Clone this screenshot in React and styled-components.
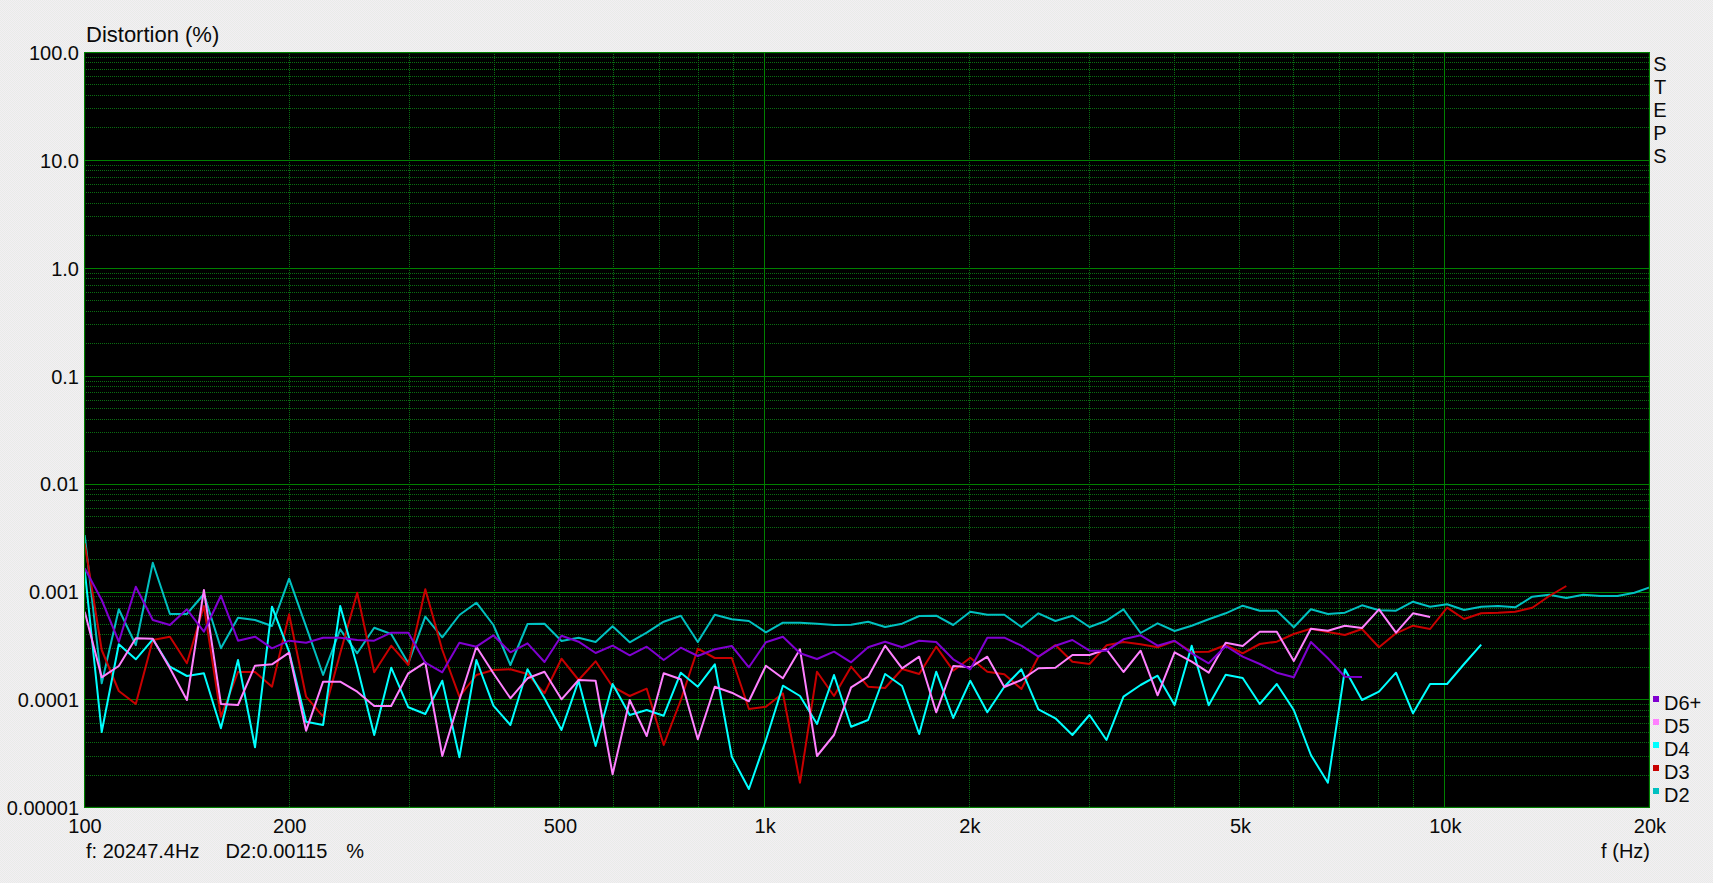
import React from 'react'
import styled, { createGlobalStyle } from 'styled-components'

const PLOT_W = 1566
const PLOT_H = 756
const X0 = 0.7
const STEP = 17.03
const DECADE_H = 107.9
const DECADE_W = 680

// trace samples, one every 1/12 octave from 100 Hz. values are thirds of a pixel under y=560 of the page
const traces = [
  { name: 'D2', color: '#00c0c0', points: [
    -75, 370, 148, 255, 8, 162, 162, 102, 265, 173, 180, 198, 56, 200, 345, 208, 280, 203, 222, 310, 170,
    232, 165, 128, 195, 315, 192, 191, 243, 233, 246, 199, 247, 218, 185, 167, 246, 164, 178, 183, 217, 188, 188, 191, 195,
    194, 185, 201, 191, 168, 167, 195, 155, 164, 164, 201, 160, 183, 167, 201, 182, 148, 219, 190, 213, 197, 178, 160, 137, 152, 152,
    202, 148, 162, 158, 136, 151, 152, 125, 140, 133, 150, 140, 138, 142, 110, 104, 114, 104, 108, 108, 98, 80,
  ] },
  { name: 'D3', color: '#c80000', points: [
    -50, 270, 393, 432, 240, 230, 310, 138, 470, 336, 336, 380, 163, 410, 470, 280, 98, 337, 257, 315, 88,
    270, 410, 345, 330, 328, 342, 400, 296, 360, 304, 380, 408, 386, 555, 420, 266, 294, 294, 447, 440, 400, 668, 335, 408,
    320, 380, 384, 327, 342, 260, 332, 293, 335, 343, 387, 290, 255, 305, 312, 256, 246, 253, 262, 243, 276, 275, 255, 280, 252, 245,
    222, 206, 216, 225, 207, 262, 220, 197, 207, 143, 177, 160, 158, 155, 143, 108, 78,
  ] },
  { name: 'D4', color: '#00ffff', points: [
    30, 516, 253, 298, 238, 320, 348, 340, 505, 300, 562, 140, 275, 485, 495, 138, 320, 525, 323, 442, 462,
    362, 592, 300, 437, 495, 328, 415, 510, 362, 558, 372, 465, 450, 467, 338, 380, 313, 590, 687, 540, 377, 408, 492, 345,
    500, 480, 342, 378, 522, 335, 474, 362, 457, 380, 328, 448, 475, 525, 465, 540, 410, 375, 347, 435, 257, 436, 344, 354, 432, 372,
    450, 585, 668, 328, 420, 395, 338, 460, 372, 372, 312, 254,
  ] },
  { name: 'D5', color: '#ff80ff', points: [
    155, 352, 318, 235, 236, 325, 420, 90, 432, 435, 317, 313, 278, 512, 365, 365, 395, 438, 438, 340, 307,
    588, 420, 260, 340, 415, 355, 335, 418, 360, 362, 643, 420, 528, 340, 358, 538, 380, 398, 424, 317, 355, 268, 588, 525,
    382, 350, 257, 325, 290, 457, 318, 322, 290, 381, 360, 325, 323, 285, 285, 268, 336, 272, 406, 277, 305, 338, 248, 258, 215, 215,
    303, 206, 212, 197, 204, 148, 218, 160, 171,
  ] },
  { name: 'D6+', color: '#8000d0', points: [
    25, 120, 245, 80, 180, 195, 148, 215, 107, 242, 230, 265, 242, 248, 233, 233, 240, 242, 218, 218, 308,
    337, 248, 260, 226, 277, 250, 306, 227, 245, 279, 257, 286, 260, 300, 263, 288, 268, 258, 322, 247, 230, 280, 297, 275,
    307, 262, 245, 262, 242, 246, 298, 328, 233, 233, 257, 290, 257, 240, 272, 272, 238, 226, 257, 242, 280, 310, 258, 290, 312, 338,
    352, 246, 295, 350, 351,
  ] },
]

const yLabels = ['100.0', '10.0', '1.0', '0.1', '0.01', '0.001', '0.0001', '0.00001']

// one column per gap between the frequency labels, in decades
const xLabels = ['100', '200', '500', '1k', '2k', '5k', '10k', '20k']
const xColumns = '0.301fr 0.398fr 0.301fr 0.301fr 0.398fr 0.301fr 0.301fr 0'

const yAt = (decade, m) => 0.5 + DECADE_H * (decade + 1 - Math.log10(m))
const xAt = (decade, m) => X0 + DECADE_W * (decade + Math.log10(m))

const GlobalStyle = createGlobalStyle`
  html, body {
    margin: 0;
    padding: 0;
    background: #ededed;
  }
`

const Page = styled.div`
  width: 1713px;
  height: 883px;
  display: flex;
  flex-direction: column;
  overflow: hidden;
  color: #0a0a0a;
  font-family: "Liberation Sans", Arial, sans-serif;
  font-size: 20px;
  line-height: 24px;
  background: repeating-conic-gradient(#f3eef3 0 25%, #e8ece8 0 50%) 0 0 / 2px 2px;
`

const TitleRow = styled.div`
  height: 52px;
  box-sizing: border-box;
  padding: 0 0 5px 86px;
  display: flex;
  align-items: flex-end;
  font-size: 22px;
`

const PlotRow = styled.div`
  display: flex;
  height: ${PLOT_H}px;
`

const YAxis = styled.div`
  width: 79px;
  margin-right: 5px;
  padding-top: 1px;
  box-sizing: border-box;
  display: flex;
  flex-direction: column;
  justify-content: space-between;
`

const YTick = styled.div`
  height: 0;
  display: flex;
  align-items: center;
  justify-content: flex-end;
`

const Plot = styled.svg`
  display: block;
  flex: none;
  background: #000;
`

const SidePanel = styled.div`
  flex: 1;
  display: flex;
  flex-direction: column;
  justify-content: space-between;
  padding: 1px 0 2px 3px;
`

const Steps = styled.div`
  width: 14px;
  text-align: center;
  line-height: 23px;
  font-size: 20px;
`

const Legend = styled.div`
  display: flex;
  flex-direction: column;
`

const LegendRow = styled.div`
  height: 23px;
  display: flex;
  align-items: center;
  gap: 5px;
`

const Swatch = styled.span`
  width: 6px;
  height: 6px;
  margin-bottom: 7px;
  background: ${props => props.$color};
`

const XAxis = styled.div`
  margin: 6px 0 0 85px;
  width: 1565px;
  height: 24px;
  display: grid;
  grid-template-columns: ${xColumns};
`

const XTick = styled.div`
  width: 0;
  display: flex;
  justify-content: center;
`

const StatusRow = styled.div`
  margin-top: 1px;
  width: 1650px;
  box-sizing: border-box;
  padding-left: 86px;
  display: flex;
`

const StatusValue = styled.span`
  margin-left: ${props => props.$gap}px;
  white-space: pre;
`

const AxisName = styled.span`
  margin-left: auto;
`

function Grid() {
  const lines = []
  for (let d = 0; d < 7; d++) {
    for (let m = 2; m < 10; m++) {
      const y = Math.floor(yAt(d, m)) + 0.5
      lines.push(<line key={`h${d}-${m}`} x1="0" x2={PLOT_W} y1={y} y2={y} stroke="#0a6e12" strokeDasharray="1 1" />)
    }
  }
  for (let d = 0; d < 3; d++) {
    for (let m = 2; m < 10; m++) {
      const x = Math.floor(xAt(d, m)) + 0.5
      if (x > PLOT_W) break
      lines.push(<line key={`v${d}-${m}`} y1="0" y2={PLOT_H} x1={x} x2={x} stroke="#0a6e12" strokeDasharray="1 1" />)
    }
  }
  for (let d = 0; d < 8; d++) {
    const y = Math.floor(0.5 + DECADE_H * d) + 0.5
    lines.push(<line key={`H${d}`} x1="0" x2={PLOT_W} y1={y} y2={y} stroke="#008000" />)
  }
  ;[xAt(1, 1), xAt(2, 1)].forEach(v => {
    const x = Math.floor(v) + 0.5
    lines.push(<line key={`V${x}`} y1="0" y2={PLOT_H} x1={x} x2={x} stroke="#008000" />)
  })
  return <g shapeRendering="crispEdges">{lines}</g>
}

function Trace({ color, points }) {
  const d = points.map((v, i) => `${(X0 + STEP * i).toFixed(1)},${(v / 3 + 508).toFixed(1)}`).join(' ')
  return <polyline points={d} fill="none" stroke={color} strokeWidth="2" strokeLinejoin="round" />
}

export default function App() {
  return (
    <Page>
      <GlobalStyle />
      <TitleRow>Distortion (%)</TitleRow>
      <PlotRow>
        <YAxis>
          {yLabels.map(label => <YTick key={label}>{label}</YTick>)}
        </YAxis>
        <Plot width={PLOT_W} height={PLOT_H} viewBox={`0 0 ${PLOT_W} ${PLOT_H}`}>
          <Grid />
          {traces.map(t => <Trace key={t.name} color={t.color} points={t.points} />)}
          <rect x="0.5" y="0.5" width={PLOT_W - 1} height={PLOT_H - 1} fill="none" stroke="#008000" strokeWidth="1.3" />
        </Plot>
        <SidePanel>
          <Steps>S<br />T<br />E<br />P<br />S</Steps>
          <Legend>
            {[...traces].reverse().map(t => (
              <LegendRow key={t.name}>
                <Swatch $color={t.color} />
                {t.name}
              </LegendRow>
            ))}
          </Legend>
        </SidePanel>
      </PlotRow>
      <XAxis>
        {xLabels.map(label => <XTick key={label}>{label}</XTick>)}
      </XAxis>
      <StatusRow>
        <span>f: 20247.4Hz</span>
        <StatusValue $gap={26}>D2:0.00115</StatusValue>
        <StatusValue $gap={19}>%</StatusValue>
        <AxisName>f (Hz)</AxisName>
      </StatusRow>
    </Page>
  )
}
